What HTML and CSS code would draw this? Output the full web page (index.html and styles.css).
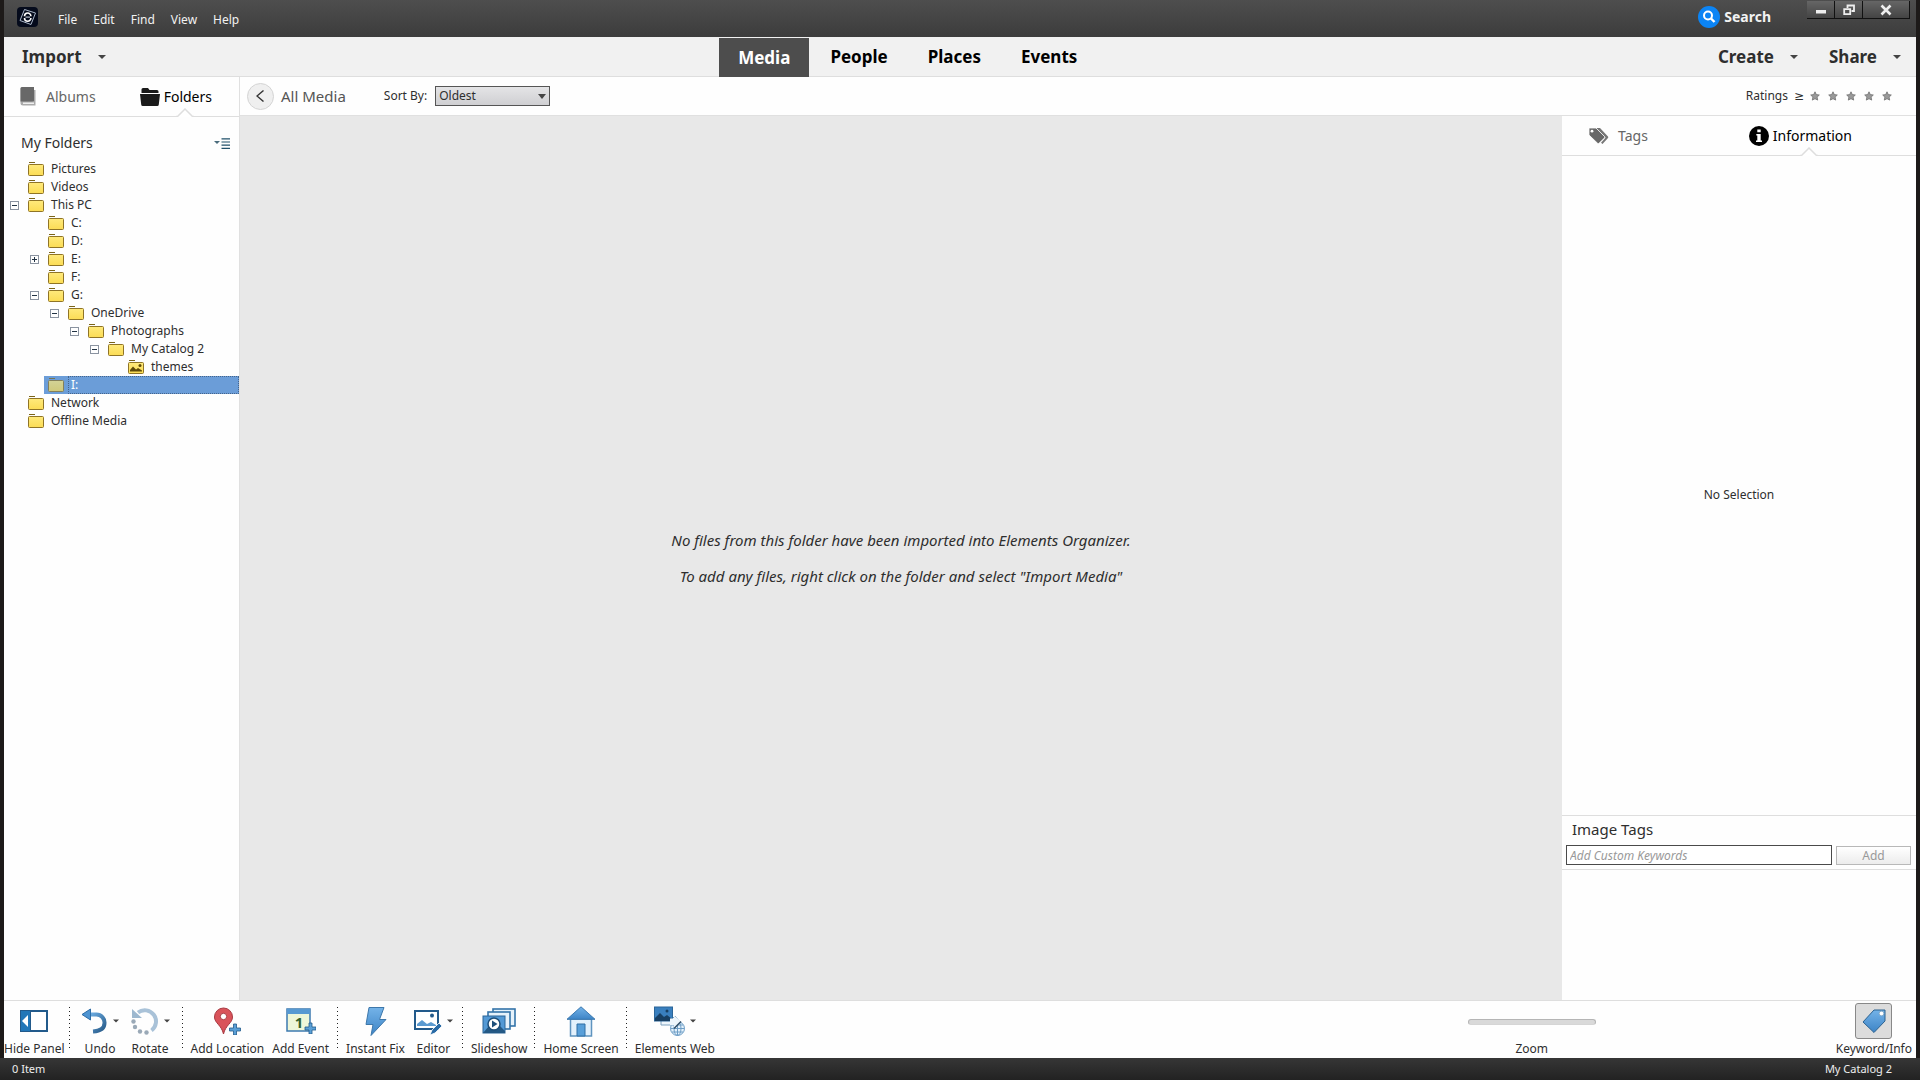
FILE: index.html
```html
<!DOCTYPE html>
<html lang="en">
<head>
<meta charset="utf-8">
<title>Elements Organizer</title>
<link rel="stylesheet" href="styles.css">
</head>
<body>
<svg class="defs" aria-hidden="true">
  <defs>
    <linearGradient id="g-folder" x1="0" y1="0" x2="0" y2="1"><stop offset="0" stop-color="#ffea7c"/><stop offset="1" stop-color="#fbdc55"/></linearGradient>
    <linearGradient id="g-blue" x1="0" y1="0" x2="0" y2="1"><stop offset="0" stop-color="#74b3e8"/><stop offset="1" stop-color="#3d84c6"/></linearGradient>
    <linearGradient id="g-undo" x1="0" y1="0" x2="1" y2="1"><stop offset="0" stop-color="#6fb0e6"/><stop offset="1" stop-color="#275a88"/></linearGradient>
    <symbol id="folder" viewBox="0 0 16 14"><path d="M1 .5h6" stroke="#7b6418"/><rect x=".5" y="2.500" width="15" height="11" rx="1" fill="url(#g-folder)" stroke="#8f7426"/></symbol>
    <symbol id="caret" viewBox="0 0 8 4"><path d="M0 0h8L4 4z" fill="#444"/></symbol>
    <symbol id="star" viewBox="0 0 10 10"><path d="M5 .8l1.300 2.800 3 .4-2.200 2.100.6 3L5 7.700 2.300 9.100l.6-3L.7 4l3-.4z" fill="#999" stroke="#707070" stroke-width=".8"/></symbol>
    <symbol id="notch" viewBox="0 0 18 9"><path d="M1 9l8-8 8 8z" fill="#fff"/><path d="M0 8.500h1.500L9 1l7.500 7.500H18" fill="none" stroke="#dedede" stroke-width="1.500"/></symbol>
  </defs>
</svg>
<div class="window">
  <header class="titlebar">
    <svg class="logo" width="21" height="20" viewBox="0 0 21 20"><rect width="21" height="20" rx="4" fill="#050b1c"/><g fill="none" stroke="#a9b6c8"><path d="M7.500 2.500L18.500 6 14 17.500 3 13.500z"/><path d="M7.500 9.300a3.200 3.300 0 016.400 0M7.500 10.900a3.200 3.300 0 006.400 0" stroke="#fff" stroke-width="1.600"/><path d="M8.500 10.100h4.500" stroke="#d7e0ec"/></g></svg>
    <nav class="menu">
      <button>File</button><button>Edit</button><button>Find</button><button>View</button><button>Help</button>
    </nav>
    <button class="search">
      <svg width="22" height="22" viewBox="0 0 22 22"><circle cx="11" cy="11" r="11" fill="#0b84f5"/><circle cx="10" cy="9.500" r="4" fill="none" stroke="#fff" stroke-width="2"/><path d="M13 12.500l3.500 3.500" stroke="#fff" stroke-width="2.400"/></svg>
      Search
    </button>
    <div class="wincontrols">
      <button aria-label="Minimize"><svg width="12" height="12" viewBox="0 0 12 12"><path d="M1 6h10v3.500H1z" fill="#eee"/></svg></button>
      <button aria-label="Restore"><svg width="12" height="12" viewBox="0 0 12 12"><g fill="none" stroke="#eee" stroke-width="1.800"><path d="M4.500 4V1.500h6.500V7H8.500"/><path d="M1.200 5.200h6v5h-6z"/></g></svg></button>
      <button aria-label="Close" class="close"><svg width="12" height="12" viewBox="0 0 12 12"><path d="M1.500 1.500l9 9M10.500 1.500l-9 9" stroke="#eee" stroke-width="2.600"/></svg></button>
    </div>
  </header>
  <div class="modebar">
    <button class="drop">Import <svg width="8" height="4"><use href="#caret"/></svg></button>
    <nav class="modes">
      <button class="mode active">Media</button><button class="mode">People</button><button class="mode">Places</button><button class="mode">Events</button>
    </nav>
    <div class="actions">
      <button class="drop">Create <svg width="8" height="4"><use href="#caret"/></svg></button>
      <button class="drop">Share <svg width="8" height="4"><use href="#caret"/></svg></button>
    </div>
  </div>
  <div class="workspace">
    <aside class="sidebar">
      <div class="tabs">
        <button class="tab"><svg width="17" height="19" viewBox="0 0 17 19"><path d="M2 0h12v14.500H3.500a1.500 1.500 0 000 3H14V16M3 0h-1a1.500 1.500 0 00-1.500 1.500V16a2.500 2.500 0 002.500 2.500h12.500V3H14z" fill="#aaa"/><path d="M2 0h12v14.500H.5v-13A1.500 1.500 0 012 0z" fill="#686868"/><path d="M3 15.500h11v1.500H3z" fill="#eee"/></svg>Albums</button>
        <button class="tab active"><svg width="20" height="18" viewBox="0 0 20 18"><path d="M1.500 5V1.500Q1.500 0 3 0h5l1.500 2H17q1.500 0 1.500 1.500V5z" fill="#1a1a1a"/><path d="M0 6h20l-1.200 10.500q-.1 1.500-1.600 1.500H2.800q-1.500 0-1.600-1.500z" fill="#1a1a1a"/></svg>Folders<svg class="notch" width="18" height="9"><use href="#notch"/></svg></button>
      </div>
      <div class="side-head">
        <h2>My Folders</h2>
        <button aria-label="Folder view options"><svg width="16" height="11" viewBox="0 0 16 11"><path d="M0 3h6L3 6z" fill="#4a6c7c"/><path d="M7.500.8H16M7.500 4h8.500M7.500 7.200h8.500M7.500 10.400h8.500" stroke="#21506a" stroke-width="1.200"/></svg></button>
      </div>
      <ul class="tree">
        <li class="l0"><i class="exp"></i><svg class="ico"><use href="#folder"/></svg><span>Pictures</span></li>
        <li class="l0"><i class="exp"></i><svg class="ico"><use href="#folder"/></svg><span>Videos</span></li>
        <li class="l0"><i class="exp box"></i><svg class="ico"><use href="#folder"/></svg><span>This PC</span></li>
        <li class="l1"><i class="exp"></i><svg class="ico"><use href="#folder"/></svg><span>C:</span></li>
        <li class="l1"><i class="exp"></i><svg class="ico"><use href="#folder"/></svg><span>D:</span></li>
        <li class="l1"><i class="exp box plus"></i><svg class="ico"><use href="#folder"/></svg><span>E:</span></li>
        <li class="l1"><i class="exp"></i><svg class="ico"><use href="#folder"/></svg><span>F:</span></li>
        <li class="l1"><i class="exp box"></i><svg class="ico"><use href="#folder"/></svg><span>G:</span></li>
        <li class="l2"><i class="exp box"></i><svg class="ico"><use href="#folder"/></svg><span>OneDrive</span></li>
        <li class="l3"><i class="exp box"></i><svg class="ico"><use href="#folder"/></svg><span>Photographs</span></li>
        <li class="l4"><i class="exp box"></i><svg class="ico"><use href="#folder"/></svg><span>My Catalog 2</span></li>
        <li class="l5"><i class="exp"></i><svg class="ico" viewBox="0 0 16 14"><use href="#folder" width="16" height="14"/><path d="M2 11.500V10l3-3.500L8 9.500l2-1.500 4 2.500v1z" fill="#5f4a08"/><circle cx="12" cy="5.500" r="1.500" fill="#5f4a08"/></svg><span>themes</span></li>
        <li class="l1 selected"><div class="pick"><svg class="ico"><use href="#folder"/></svg><span>I:</span></div></li>
        <li class="l0"><i class="exp"></i><svg class="ico"><use href="#folder"/></svg><span>Network</span></li>
        <li class="l0"><i class="exp"></i><svg class="ico"><use href="#folder"/></svg><span>Offline Media</span></li>
      </ul>
    </aside>
    <div class="content">
      <div class="subbar">
        <button class="back"><span class="circle"><svg width="8" height="12" viewBox="0 0 8 12"><path d="M7.500.5L1 6l6.500 5.500" fill="none" stroke="#333" stroke-width="1.400"/></svg></span>All Media</button>
        <label for="sort">Sort By:</label>
        <div class="select"><select id="sort"><option>Oldest</option></select><svg width="8" height="5" viewBox="0 0 8 4" preserveAspectRatio="none"><use href="#caret"/></svg></div>
        <div class="ratings"><span>Ratings</span><button class="ge">≥</button>
          <button aria-label="1 star"><svg width="10" height="10"><use href="#star"/></svg></button>
          <button aria-label="2 stars"><svg width="10" height="10"><use href="#star"/></svg></button>
          <button aria-label="3 stars"><svg width="10" height="10"><use href="#star"/></svg></button>
          <button aria-label="4 stars"><svg width="10" height="10"><use href="#star"/></svg></button>
          <button aria-label="5 stars"><svg width="10" height="10"><use href="#star"/></svg></button>
        </div>
      </div>
      <div class="panes">
        <main class="grid">
          <p>No files from this folder have been imported into Elements Organizer.</p>
          <p>To add any files, right click on the folder and select "Import Media"</p>
        </main>
        <aside class="info">
          <div class="tabs">
            <button class="tab"><svg width="21" height="18" viewBox="0 0 21 18"><path d="M8 1h4l8 8.500q.6.700 0 1.400L14.500 17 13 15.700l4.500-5z" fill="#777"/><path d="M1.500 1H8l8.500 8.500q.6.700 0 1.400L11 16.300q-.7.600-1.400 0L1 8V1.500z" fill="#686868" stroke="#fff" stroke-width=".8"/><circle cx="4" cy="4.200" r="1.400" fill="#fff"/></svg>Tags</button>
            <button class="tab active"><svg width="20" height="20" viewBox="0 0 20 20"><circle cx="10" cy="10" r="10" fill="#000"/><path d="M8.300 3.500h3.400v2.700H8.300zM7.300 8h4.400v6.500H13V16H7v-1.500h1.300v-5h-1z" fill="#fff"/></svg>Information<svg class="notch" width="18" height="9"><use href="#notch"/></svg></button>
          </div>
          <div class="none">No Selection</div>
          <section class="imgtags">
            <h2><label for="kw">Image Tags</label></h2>
            <div class="kwrow"><input id="kw" type="text" placeholder="Add Custom Keywords"><button disabled>Add</button></div>
          </section>
          <div class="taglist"></div>
        </aside>
      </div>
    </div>
  </div>
  <footer class="toolbar">
    <div class="group edge">
      <button class="tool"><span class="art"><svg width="28" height="22" viewBox="0 0 28 22"><rect x="1" y="1" width="26" height="20" fill="#fff" stroke="#225a8b" stroke-width="2"/><path d="M1 1h10v20H1z" fill="#2277b8"/><path d="M10.500 1v20" stroke="#225a8b"/><path d="M8 5v12l-6-6z" fill="#fff"/></svg></span>Hide Panel</button>
    </div>
    <div class="group wide">
      <button class="tool"><span class="art"><svg width="26" height="26" viewBox="0 0 26 26"><path d="M6 6.500h8.500a8 8 0 018 8.500c0 5-4 8-11.500 8.500" fill="none" stroke="url(#g-undo)" stroke-width="4"/><path d="M0 6.500L8.500 1v11z" fill="#4e94d2" stroke="#2c6ba5"/></svg><svg width="6" height="4"><use href="#caret"/></svg></span>Undo</button>
      <button class="tool"><span class="art"><svg width="28" height="28" viewBox="0 0 28 28"><path d="M7 5.500A10.500 10.500 0 1120.500 23.500" fill="none" stroke="#a9c2d8" stroke-width="4"/><path d="M1 2v9h10z" fill="#9db8cf"/><g fill="#9aa9b7"><circle cx="2.500" cy="14.500" r="2.200"/><circle cx="4" cy="20" r="2.200"/><circle cx="9" cy="24.500" r="2.200"/><circle cx="15.500" cy="25.500" r="2.200"/></g></svg><svg width="6" height="4"><use href="#caret"/></svg></span>Rotate</button>
    </div>
    <div class="group">
      <button class="tool"><span class="art"><svg width="28" height="28" viewBox="0 0 28 28"><path d="M10.500 1A9 9 0 001.500 10c0 6 7 8 9 17 2-9 9-11 9-17a9 9 0 00-9-9z" fill="#d9535a" stroke="#a83a42"/><circle cx="10.500" cy="9.500" r="3.200" fill="#fff" stroke="#a83a42"/><path d="M20.500 17h3v4h4v3h-4v4h-3v-4h-4v-3h4z" fill="#5a9fd6" stroke="#225a8b" stroke-width=".8"/></svg></span>Add Location</button>
      <button class="tool"><span class="art"><svg width="30" height="26" viewBox="0 0 30 26"><rect x="1" y="1" width="23" height="22" fill="#eef6d8" stroke="#3c7ab0" stroke-width="1.500"/><path d="M1 1h23v5H1z" fill="#5799d2"/><text x="13" y="20" text-anchor="middle" class="day">1</text><path d="M23 15h3v4h4v3h-4v4h-3v-4h-4v-3h4z" fill="#5a9fd6" stroke="#225a8b" stroke-width=".8"/></svg></span>Add Event</button>
    </div>
    <div class="group pair">
      <button class="tool"><span class="art"><svg width="22" height="29" viewBox="0 0 22 29"><path d="M4 .5h15L14.500 12.500H21L6 28.500l2-11H1z" fill="url(#g-blue)" stroke="#3d77aa"/></svg></span>Instant Fix</button>
      <button class="tool"><span class="art"><svg width="28" height="28" viewBox="0 0 28 28"><rect x="1" y="4" width="23" height="18" fill="#fff" stroke="#225a8b" stroke-width="2"/><path d="M3 19v-2l5-4 5 4 4-2 5 3v1z" fill="#5b9ad0"/><circle cx="18" cy="8.500" r="2" fill="#225a8b"/><path d="M16 28l2-5 7-7 3 3-7 7z" fill="#286aa6" stroke="#fff" stroke-width=".8"/></svg><svg width="6" height="4"><use href="#caret"/></svg></span>Editor</button>
    </div>
    <div class="group slim">
      <button class="tool"><span class="art"><svg width="34" height="26" viewBox="0 0 34 26"><g fill="#e6f2fb" stroke="#3473a9" stroke-width="1.600"><rect x="11" y="1" width="22" height="17"/><rect x="6" y="4" width="22" height="17"/></g><rect x="1" y="8" width="22" height="17" fill="#5399d5" stroke="#2b6598"/><path d="M1 25l6-7 4 4 6-5 6 6v2z" fill="#245985"/><circle cx="12" cy="16" r="6" fill="#fff" stroke="#1d4f7a" stroke-width="1.500"/><path d="M10 12.500v7l5.500-3.500z" fill="#1d4f7a"/></svg></span>Slideshow</button>
    </div>
    <div class="group slim">
      <button class="tool"><span class="art"><svg width="30" height="31" viewBox="0 0 30 31"><path d="M4.500 13h21v17h-21z" fill="#e3f1fc" stroke="#5f94bf" stroke-width="1.500"/><path d="M15 .8l14 12.500H1z" fill="url(#g-blue)" stroke="#3b79b0"/><path d="M11 18h8v12h-8z" fill="#589fd9" stroke="#2f6ea5"/></svg></span>Home Screen</button>
    </div>
    <div class="group last">
      <button class="tool"><span class="art"><svg width="31" height="30" viewBox="0 0 31 30"><path d="M7 13h11l3-3 6 7-6 5v-3H7z" fill="#edf5fb" stroke="#7a9fbd"/><rect x=".5" y="1" width="18" height="14" fill="#397fbe" stroke="#2b6598"/><path d="M1 15v-3l5-5 4 4 3-2 5 4v2z" fill="#173f63"/><circle cx="13" cy="5" r="1.500" fill="#173f63"/><circle cx="23.500" cy="22.500" r="7" fill="#e4f1fb" stroke="#6e9ec6"/><path d="M16.500 22.500h14M23.500 15.500v14M18 19h11M18 26h11" stroke="#6e9ec6"/><ellipse cx="23.500" cy="22.500" rx="3.500" ry="7" fill="none" stroke="#6e9ec6"/><path d="M16 12.500h4v-3l7 6-7 7v-3.500h-4z" fill="#edf5fb"/><path d="M20 22.500l7-7" stroke="#2d4a63" stroke-width="1.500"/></svg><svg width="6" height="4"><use href="#caret"/></svg></span>Elements Web</button>
    </div>
    <div class="zoom"><input id="zoom" type="range"><label for="zoom">Zoom</label></div>
    <button class="tool keyword"><span class="frame"><svg width="24" height="24" viewBox="0 0 24 24"><path d="M12 1h11v11L12 23.500 1 13z" fill="url(#g-blue)" stroke="#2c6290" stroke-linejoin="round"/><circle cx="19.500" cy="4.500" r="2.300" fill="#fff" stroke="#7da3c2" stroke-width=".8"/></svg></span>Keyword/Info</button>
  </footer>
</div>
<div class="status"><span>0 Item</span><span>My Catalog 2</span></div>
</body>
</html>
```
FILE: styles.css
```css
* { box-sizing: border-box; }
body {
  margin: 0;
  min-height: 100vh;
  display: flex;
  flex-direction: column;
  background: #222;
  color: #2e2e2e;
  font: 12px/18px "Noto Sans", "DejaVu Sans", sans-serif;
}
button, input, select { font: inherit; color: inherit; }
button { border: 0; padding: 0; background: none; white-space: nowrap; }
h2, p, ul { margin: 0; padding: 0; list-style: none; }
h2 { font-size: 15px; font-weight: 400; line-height: 20px; }
svg { flex: none; display: block; }
.defs { position: absolute; width: 0; height: 0; }
.window {
  flex: 1;
  display: flex;
  flex-direction: column;
  border: solid #1d1a19;
  border-width: 0 4px;
}

.titlebar {
  display: flex;
  align-items: flex-start;
  height: 37px;
  padding-left: 13px;
  background: linear-gradient(#4e4e4e, #3c3c3c);
  color: #f2f2f2;
}
.logo { margin-top: 7px; }
.menu { display: flex; gap: 16px; margin: 11px auto 0 20px; }
.search { display: flex; align-items: center; gap: 4px; margin-top: 6px; font-size: 14px; font-weight: 700; line-height: 22px; }
.wincontrols { display: flex; gap: 1px; margin: 1px 6px 0 36px; padding: 0 1px 1px 0; background: #111; }
.wincontrols button {
  width: 27px;
  height: 17px;
  display: grid;
  place-items: center;
  background: linear-gradient(#666, #444);
}
.wincontrols .close { width: 46px; }

.modebar {
  display: flex;
  justify-content: space-between;
  height: 40px;
  padding: 0 15px 0 18px;
  background: #f1f1f1;
  border-bottom: 1px solid #dedede;
}
.drop { display: flex; align-items: center; gap: 16px; font-size: 17px; font-weight: 700; }
.modes { display: flex; gap: 2px; margin-right: 8px; }
.mode { padding: 0 19px; margin-bottom: -1px; color: #000; font-size: 17px; font-weight: 700; }
.mode.active { margin-top: 1px; background: #4d4d4d; color: #fff; }
.actions { display: flex; gap: 31px; }

.workspace { flex: 1; display: flex; background: #fefefe; }
.sidebar { width: 236px; flex: none; border-right: 1px solid #e0e0e0; }
.tabs { display: flex; height: 40px; border-bottom: 1px solid #dedede; }
.tab { position: relative; display: flex; align-items: center; font-size: 14px; color: #666; }
.tab.active { color: #000; }
.notch { position: absolute; bottom: -1px; left: 50%; }
.sidebar .tabs { padding: 0 27px 0 16px; justify-content: space-between; }
.sidebar .tab { gap: 9px; }
.sidebar .tab.active { gap: 4px; }
.side-head { display: flex; align-items: center; justify-content: space-between; padding: 16px 9px 7px 17px; }
.side-head h2 { font-size: 14px; }

.tree li { display: flex; align-items: center; height: 18px; gap: 7px; padding-left: 6px; }
.tree .exp { width: 9px; height: 9px; margin-right: 2px; }
.tree .box { border: 1px solid #8a93a0; background: linear-gradient(#234, #234) center / 5px 1px no-repeat; }
.tree .plus { background: linear-gradient(#234, #234) center / 5px 1px no-repeat, linear-gradient(#234, #234) center / 1px 5px no-repeat; }
.ico { width: 16px; height: 14px; }
.tree .l1 { padding-left: 26px; }
.tree .l2 { padding-left: 46px; }
.tree .l3 { padding-left: 66px; }
.tree .l4 { padding-left: 86px; }
.tree .l5 { padding-left: 106px; }
.tree .selected { padding-left: 40px; }
.pick { flex: 1; display: flex; align-items: center; gap: 4px; padding-left: 4px; background: #6b9dd8; color: #fff; }
.pick span { flex: 1; padding-left: 2px; border: 1px dotted #44648c; line-height: 16px; }
.pick .ico { opacity: .7; }

.content { flex: 1; display: flex; flex-direction: column; min-width: 0; }
.subbar { display: flex; align-items: center; height: 39px; padding: 0 24px 0 7px; border-bottom: 1px solid #e0e0e0; }
.back { display: flex; align-items: center; gap: 7px; margin-right: 38px; font-size: 15px; color: #555; }
.circle { width: 27px; height: 27px; display: grid; place-items: center; padding-right: 2px; border: 1px solid #d4d4d4; border-radius: 50%; background: #efefef; }
.select { position: relative; margin-left: 8px; }
.select select {
  display: block;
  width: 115px;
  height: 20px;
  padding: 0 3px;
  border: 1px solid #555;
  border-radius: 0;
  background: linear-gradient(#e4e4e6, #cfcfd2);
  appearance: none;
  line-height: 16px;
}
.select svg { position: absolute; right: 4px; top: 8px; pointer-events: none; }
.ratings { display: flex; align-items: center; gap: 8px; margin-left: auto; }
.ge { margin: 0 -2px; }

.panes { flex: 1; display: flex; }
.grid {
  flex: 1;
  display: flex;
  flex-direction: column;
  align-items: center;
  justify-content: center;
  background: #e8e8e8;
  font-size: 15px;
  font-style: italic;
  line-height: 36px;
}
.info { width: 354px; flex: none; display: flex; flex-direction: column; }
.info .tabs { padding: 0 64px 0 26px; justify-content: space-between; }
.info .tab { gap: 9px; }
.info .tab.active { gap: 4px; }
.none { flex: 1; display: grid; place-items: center; padding-top: 18px; }
.imgtags { padding: 3px 5px 4px 4px; border: solid #dedede; border-width: 1px 0; }
.imgtags h2 { padding: 0 6px 6px; }
.kwrow { display: flex; align-items: center; gap: 4px; }
.kwrow input { flex: 1; min-width: 0; height: 20px; padding: 0 3px; border: 1px solid #4a4a4a; background: #fff; }
.kwrow input::placeholder { color: #999; font-style: italic; }
.kwrow button { width: 75px; height: 19px; border: 1px solid #b8b8b8; background: linear-gradient(#fff, #ececec); color: #999; }
.taglist { height: 130px; }

.toolbar { display: flex; height: 58px; background: #fefefe; border-top: 1px solid #dedede; }
.group { display: flex; padding-left: 8px; gap: 8px; }
.group:not(.last)::after { content: ""; width: 1px; height: 42px; margin-top: 6px; background: repeating-linear-gradient(#222 0 1px, transparent 1px 4px); }
.edge { padding-left: 0; gap: 4px; }
.wide { padding-left: 12px; gap: 12px; }
.pair { gap: 9px; }
.slim { padding-left: 8px; gap: 7px; }
.tool { display: flex; flex-direction: column; align-items: center; line-height: 16px; }
.art { display: flex; align-items: center; justify-content: center; gap: 5px; height: 40px; }
.day { font: 700 15px "Noto Sans", sans-serif; fill: #35612e; }
.zoom { display: flex; flex-direction: column; align-items: center; gap: 15px; margin: 18px 240px 0 auto; }
.zoom input { width: 128px; height: 6px; margin: 0; appearance: none; border: 1px solid #b5b5b5; border-bottom-color: #d5d5d5; border-radius: 3px; background: #d9d9d9; }
.zoom input::-webkit-slider-thumb { appearance: none; width: 0; height: 0; }
.keyword { margin-right: 4px; }
.frame { width: 37px; height: 36px; margin: 2px 0; display: grid; place-items: center; border: 1px solid #888; border-radius: 3px; background: #dcdcdc; }

.status { display: flex; justify-content: space-between; height: 22px; padding: 0 28px 0 12px; background: linear-gradient(#363636, #222); color: #eee; font-size: 11px; line-height: 22px; }
```
